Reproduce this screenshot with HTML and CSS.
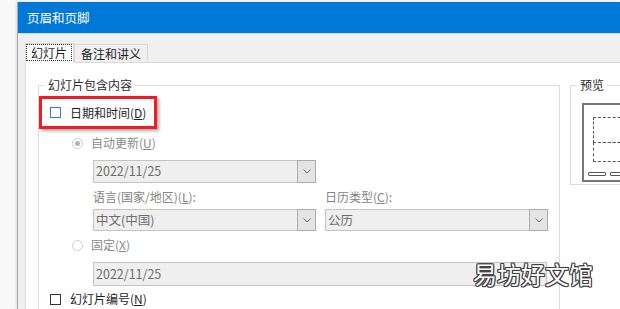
FILE: index.html
```html
<!DOCTYPE html>
<html lang="zh-CN">
<head>
    <meta charset="UTF-8">
    <title>页眉和页脚</title>
    <link rel="stylesheet" href="styles.css">
</head>
<body>
    <div class="window">
        <div class="titlebar">页眉和页脚</div>

        <div class="dialog">
            <div class="tabs">
                <div class="tab tab-active"><span class="focus">幻灯片</span></div>
                <div class="tab">备注和讲义</div>
            </div>

            <div class="panel">
                <fieldset class="group group-main">
                    <legend>幻灯片包含内容</legend>

                    <div class="highlight">
                        <div class="check"><span class="box box-focus"></span><span>日期和时间(<u>D</u>)</span></div>
                    </div>

                    <div class="option"><span class="radio radio-on"></span><span>自动更新(<u>U</u>)</span></div>

                    <div class="sub">
                        <div class="select select-date">
                            <span class="value">2022/11/25</span>
                            <span class="drop"><svg width="8" height="5" viewBox="0 0 8 5"><polyline points="0.5,0.5 4,4 7.5,0.5" fill="none" stroke="#707070" stroke-width="1"/></svg></span>
                        </div>

                        <div class="pair">
                            <div class="field">
                                <div class="label">语言(国家/地区)(<u>L</u>):</div>
                                <div class="select">
                                    <span class="value">中文(中国)</span>
                                    <span class="drop"><svg width="8" height="5" viewBox="0 0 8 5"><polyline points="0.5,0.5 4,4 7.5,0.5" fill="none" stroke="#707070" stroke-width="1"/></svg></span>
                                </div>
                            </div>
                            <div class="field">
                                <div class="label">日历类型(<u>C</u>):</div>
                                <div class="select">
                                    <span class="value">公历</span>
                                    <span class="drop"><svg width="8" height="5" viewBox="0 0 8 5"><polyline points="0.5,0.5 4,4 7.5,0.5" fill="none" stroke="#707070" stroke-width="1"/></svg></span>
                                </div>
                            </div>
                        </div>
                    </div>

                    <div class="option option-fixed"><span class="radio"></span><span>固定(<u>X</u>)</span></div>

                    <div class="sub">
                        <div class="text-input">2022/11/25</div>
                    </div>

                    <div class="check check-last"><span class="box"></span><span>幻灯片编号(<u>N</u>)</span></div>
                </fieldset>

                <fieldset class="group group-preview">
                    <legend>预览</legend>
                    <div class="preview">
                        <div class="dash dash-top"></div>
                        <div class="dash dash-bottom"></div>
                        <div class="footer-marks">
                            <span class="mark"></span>
                            <span class="mark"></span>
                            <span class="mark"></span>
                        </div>
                    </div>
                </fieldset>
            </div>
        </div>

        <div class="watermark">易坊好文馆</div>
    </div>
</body>
</html>
```

FILE: styles.css
```css
body {
    margin: 0;
    height: 309px;
    overflow: hidden;
    background-color: #f9f9f9;
    font-family: "Noto Sans CJK SC", sans-serif;
    font-size: 12px;
    line-height: 16px;
    color: #1e1e1e;
}
.window {
    position: relative;
    margin: 2px 0 0 17px;
    height: 307px;
    border-left: 1px solid #a8a8a8;
    box-shadow: -1px 0 3px rgba(0, 0, 0, 0.12);
    background-color: #f0f0f0;
    overflow: hidden;
}
.titlebar {
    height: 31px;
    line-height: 31px;
    padding-left: 9px;
    background-color: #0078d7;
    border-bottom: 1px solid #cfe0f1;
    color: #fff;
    font-size: 12.5px;
}
.dialog {
    width: 800px;
    padding: 9px 0 0 7px;
}
.tabs {
    display: flex;
    align-items: flex-end;
    height: 19px;
}
.tab {
    height: 17px;
    line-height: 17px;
    padding: 0 6px;
    border: 1px solid #d9d9d9;
    border-bottom: none;
    background-color: #f0f0f0;
}
.tab-active {
    height: 19px;
    line-height: 18px;
    padding: 0 2px 0 1px;
    margin-bottom: -1px;
    background-color: #fff;
    position: relative;
    z-index: 1;
}
.focus {
    display: inline-block;
    line-height: 15px;
    padding: 0 4px;
    outline: 1px dotted #333;
}
.panel {
    display: flex;
    align-items: flex-start;
    gap: 10px;
    height: 260px;
    padding: 14px 0 0 12px;
    border: 1px solid #d9d9d9;
    background-color: #fff;
}
.group {
    margin: 0;
    padding: 0;
    border: 1px solid #dcdcdc;
    min-width: 0;
    flex-shrink: 0;
}
.group legend {
    padding: 0 3px;
    margin-left: 6px;
    color: #2b2b2b;
}
.group-main {
    width: 520px;
    height: 240px;
}
.group-preview {
    width: 160px;
    height: 106px;
}
.highlight {
    display: flex;
    align-items: center;
    width: 112px;
    height: 27px;
    margin-top: 3px;
    border: 3px solid #ee1c24;
    box-shadow: 2px 2px 3px rgba(0, 0, 0, 0.35);
}
.check {
    display: flex;
    align-items: center;
    gap: 9px;
    padding-left: 8px;
    white-space: nowrap;
}
.check-last {
    margin-top: 5px;
    padding-left: 11px;
}
.box {
    width: 9px;
    height: 9px;
    border: 1px solid #333;
    background-color: #fff;
}
.box-focus {
    border-color: #3a78c2;
}
.option {
    display: flex;
    align-items: center;
    gap: 8px;
    margin-top: 6px;
    padding-left: 33px;
    color: #8a8a8a;
}
.option-fixed {
    margin-top: 6px;
}
.radio {
    position: relative;
    width: 9px;
    height: 9px;
    border: 1px solid #cdcdcd;
    border-radius: 50%;
}
.radio-on::after {
    content: "";
    position: absolute;
    left: 2px;
    top: 2px;
    width: 5px;
    height: 5px;
    border-radius: 50%;
    background-color: #b4b4b4;
}
.sub {
    padding-left: 54px;
}
.select {
    display: flex;
    width: 221px;
    height: 20px;
    border: 1px solid #c4c4c4;
    background-color: #efefef;
    color: #6d6d6d;
}
.select-date {
    height: 21px;
    margin-top: 9px;
}
.value {
    flex: 1;
    padding-left: 2px;
    line-height: 20px;
    font-size: 12.5px;
}
.drop {
    display: flex;
    align-items: center;
    justify-content: center;
    width: 17px;
    margin: -1px -1px -1px 0;
    border: 1px solid #adadad;
    background-color: #e4e4e4;
}
.pair {
    display: flex;
    gap: 9px;
    margin-top: 6px;
}
.label {
    color: #838383;
    margin-bottom: 4px;
}
.text-input {
    width: 450px;
    height: 22px;
    line-height: 22px;
    margin-top: 9px;
    padding-left: 2px;
    border: 1px solid #c4c4c4;
    background-color: #efefef;
    color: #6d6d6d;
    font-size: 12.5px;
}
.preview {
    width: 130px;
    height: 75px;
    margin: 10px 0 0 11px;
    border: 2px solid #767676;
    background-color: #fff;
}
.dash {
    width: 110px;
    margin-left: 9px;
    border: 1px dashed #555;
    border-right: none;
}
.dash-top {
    height: 24px;
    margin-top: 12px;
}
.dash-bottom {
    height: 18px;
    margin-top: -1px;
}
.footer-marks {
    display: flex;
    gap: 4px;
    margin: 10px 0 0 4px;
}
.mark {
    width: 16px;
    height: 2px;
    border: 1px solid #555;
    border-radius: 1px;
}
.watermark {
    position: absolute;
    left: 455px;
    top: 256px;
    font-size: 24px;
    line-height: 32px;
    color: #fff;
    text-shadow: 1px 0 0 #3d3d3d, -1px 0 0 #3d3d3d, 0 1px 0 #3d3d3d, 0 -1px 0 #3d3d3d,
        1px 1px 0 #3d3d3d, -1px -1px 0 #3d3d3d, 1px -1px 0 #3d3d3d, -1px 1px 0 #3d3d3d;
}
```
